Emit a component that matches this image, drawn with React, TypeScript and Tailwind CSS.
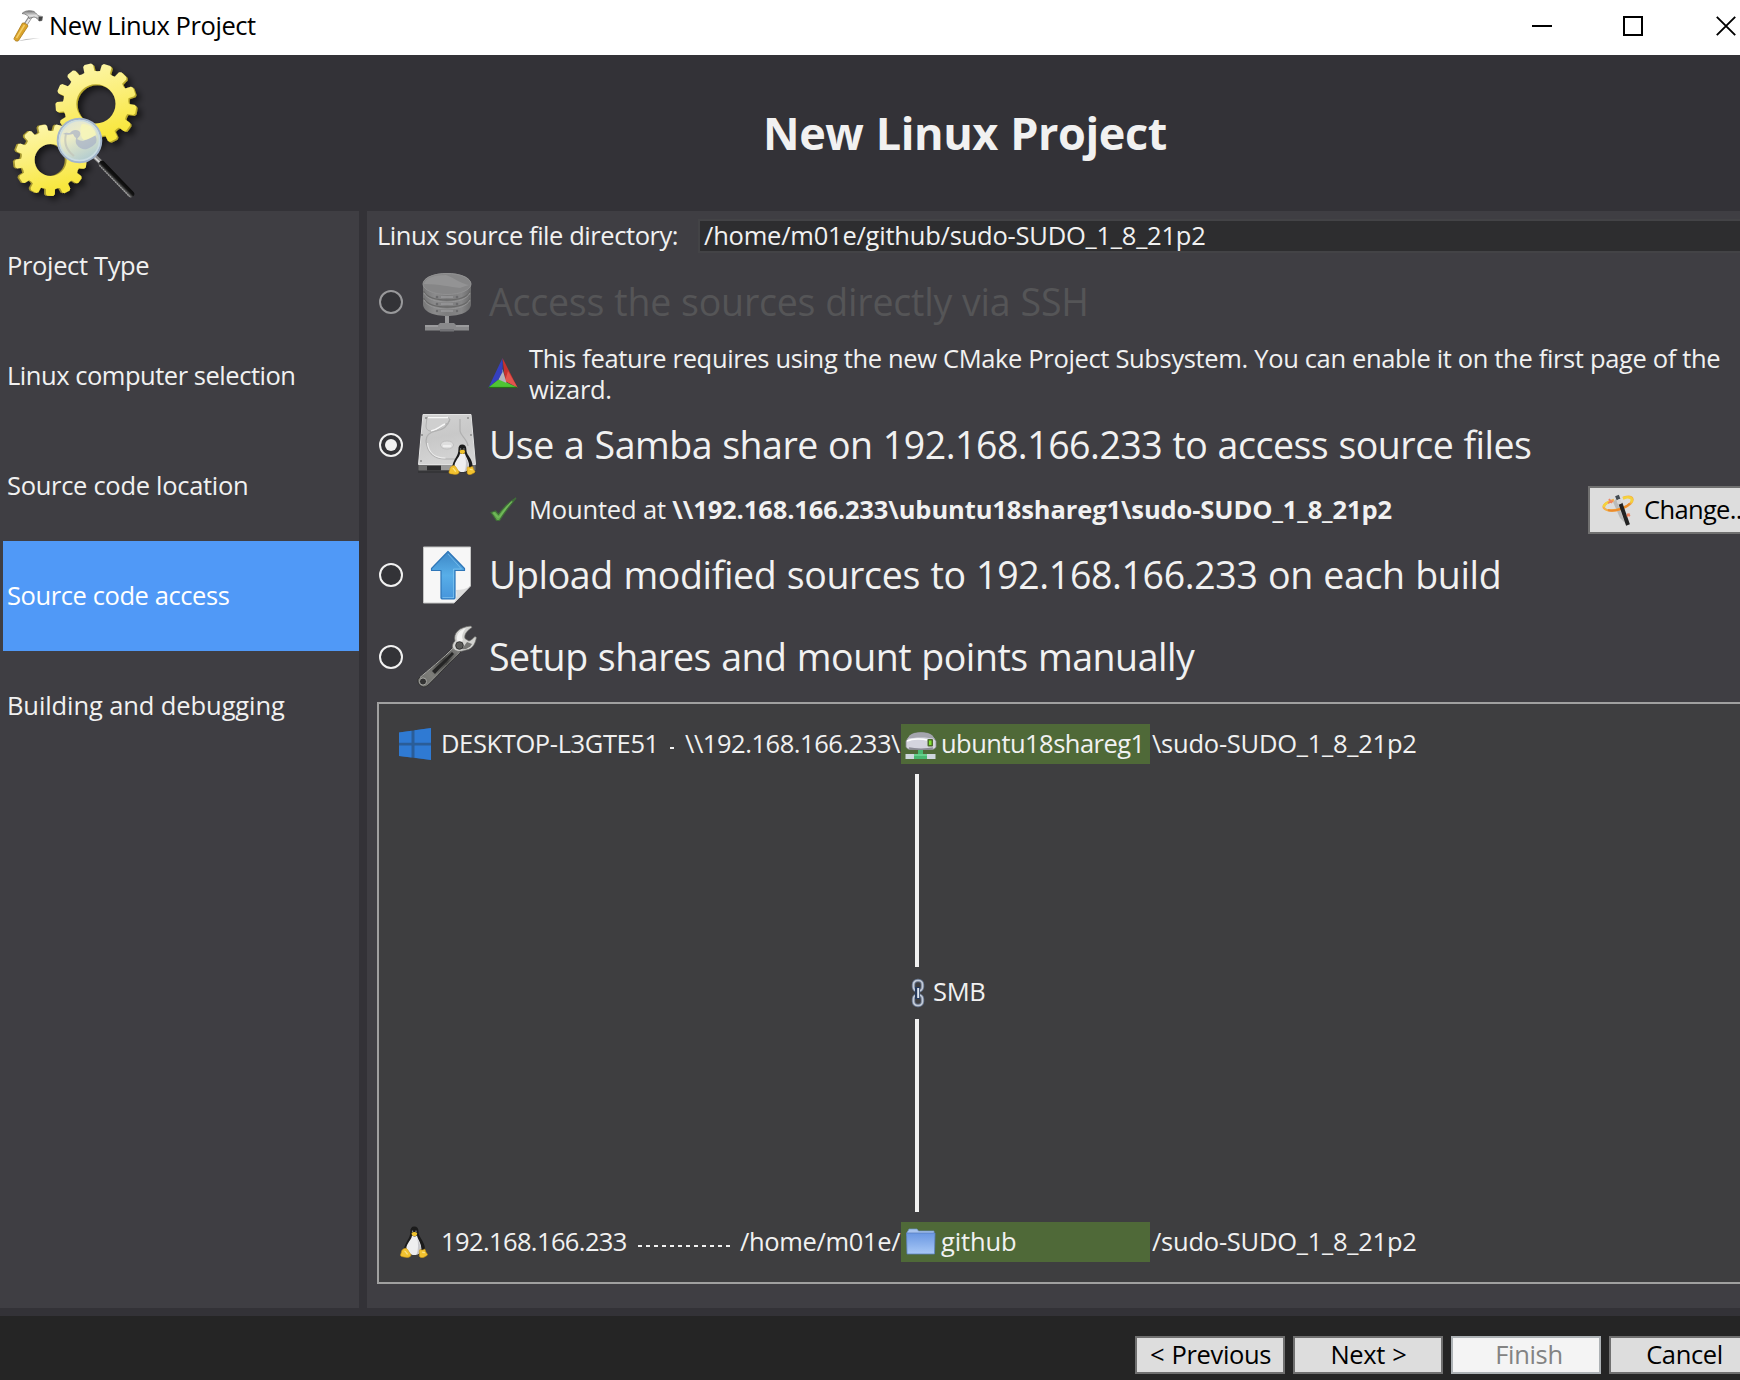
import React from 'react';

function gearPath(cx: number, cy: number, outer: number, root: number, hole: number, teeth: number, phase: number) {
  const step = (Math.PI * 2) / teeth;
  const start = (phase * Math.PI) / 180;
  const at = (r: number, a: number) => `${(cx + r * Math.cos(a)).toFixed(2)} ${(cy + r * Math.sin(a)).toFixed(2)}`;
  let d = '';
  for (let i = 0; i < teeth; i++) {
    const a = start + i * step;
    d += `${i ? 'L' : 'M'}${at(root, a - step * 0.32)}L${at(outer - 1.5, a - step * 0.27)}L${at(outer, a - step * 0.17)}L${at(outer, a + step * 0.17)}L${at(outer - 1.5, a + step * 0.27)}L${at(root, a + step * 0.32)}`;
    d += `L${at(root - 0.5, a + step * 0.5)}`;
  }
  d += `ZM${cx - hole} ${cy}a${hole} ${hole} 0 1 0 ${hole * 2} 0a${hole} ${hole} 0 1 0 ${-hole * 2} 0Z`;
  return d;
}

const upperGear = gearPath(96.5, 104, 40.5, 33, 19.6, 13, -101.6);
const lowerGear = gearPath(50, 160, 36, 29.5, 16, 13, -103.5);

function GearsLogo() {
  return (
    <svg className="h-[156px] w-[160px] shrink-0" viewBox="0 55 160 156">
      <defs>
        <linearGradient id="gearA" x1="0" y1="0" x2="0.3" y2="1">
          <stop offset="0" stopColor="#fdf8b4" />
          <stop offset="0.5" stopColor="#fbef7c" />
          <stop offset="1" stopColor="#f8e73c" />
        </linearGradient>
        <linearGradient id="lens" x1="0" y1="0" x2="0.5" y2="1">
          <stop offset="0" stopColor="#d9e0de" />
          <stop offset="0.45" stopColor="#eeedc6" />
          <stop offset="1" stopColor="#b4cdd0" />
        </linearGradient>
        <linearGradient id="grip" gradientUnits="userSpaceOnUse" x1="112" y1="181" x2="118" y2="175">
          <stop offset="0" stopColor="#c4c4c4" />
          <stop offset="0.3" stopColor="#555" />
          <stop offset="0.55" stopColor="#141414" />
          <stop offset="1" stopColor="#080808" />
        </linearGradient>
        <filter id="gearShadow" x="-20%" y="-20%" width="150%" height="150%">
          <feDropShadow dx="4" dy="3.5" stdDeviation="3" floodColor="#000" floodOpacity="0.6" />
        </filter>
      </defs>
      <g filter="url(#gearShadow)" fillRule="evenodd">
        <path d={upperGear} fill="#b9a92b" transform="translate(0.8 0.8)" />
        <path d={upperGear} fill="url(#gearA)" transform="translate(-0.6 -0.2)" />
      </g>
      <g filter="url(#gearShadow)" fillRule="evenodd">
        <path d={lowerGear} fill="#a89931" transform="translate(-1.2 0)" />
        <path d={lowerGear} fill="url(#gearA)" transform="translate(0.6 0)" />
      </g>
      <path d="M94.5 156.5l7 6.5" stroke="#8d8d8d" strokeWidth="4.5" />
      <path d="M94.5 157.5l7 6.5" stroke="#dcdcdc" strokeWidth="1.5" />
      <path d="M102 164l29 30" stroke="url(#grip)" strokeWidth="6.5" strokeLinecap="round" />
      <path d="M99.500 165.500l30 31" stroke="#9f9f9f" strokeWidth="1.2" strokeDasharray="1.5 1" />
      <circle cx="79.500" cy="140.500" r="21.800" fill="url(#lens)" stroke="#a3b5cc" strokeWidth="2" />
      <circle cx="79.500" cy="140.500" r="20" fill="none" stroke="#cadce2" strokeWidth="1.500" />
      <path d="M63 134c3-2 5-1 7-1 2-3 6-4 9-2 3 3 0 6-2 8 2 1 4 2 6 2 3-1 8-4 12-6 2 3 2 7 0 9-3 3-6 4-8 5-4 1-8-1-10-4-2-3-1-5-1-7-2-1-2-3-3-4-3 1-7 1-10 0z" fill="#a4aec6" opacity="0.650" />
      <path d="M66 134c-2 8 0 16 8 22" stroke="#c3c6ba" strokeWidth="2" fill="none" opacity="0.800" />
      <path d="M82 124c8 0 13 5 14 11-4 2-8 5-12 5-3-2-3-5-3-8-1-3-1-5 1-8z" fill="#f6f5b8" opacity="0.900" />
    </svg>
  );
}

function HammerIcon() {
  return (
    <svg className="h-[34px] w-[32px] shrink-0" viewBox="12 9 32 34">
      <defs>
        <linearGradient id="hSteel" x1="0" y1="0" x2="0" y2="1">
          <stop offset="0" stopColor="#777" />
          <stop offset="0.5" stopColor="#e4e4e4" />
          <stop offset="1" stopColor="#777" />
        </linearGradient>
      </defs>
      <path d="M16 41.500l24-3.500-14 1z" fill="#bbb" />
      <path d="M20 33l11-17" stroke="#8a8a8a" strokeWidth="4" />
      <path d="M20.500 32.500l10.500-16" stroke="#e8e8e8" strokeWidth="2.200" />
      <path d="M14 38.500l8.500-15.500c2-.5 4.500 1 5.500 3l-9.500 14.500c-1.500 1.500-4.500 0-4.500-2z" fill="#dba42a" stroke="#a87716" strokeWidth="0.800" />
      <path d="M16.500 38l8-13" stroke="#f4cd68" strokeWidth="1.500" />
      <path d="M22 13.500c3-3 8-3.500 12-2 2 1.500 3 3.500 5 4.500l3.500.5-.5 4-3 .5c-1-2-2.500-3.500-5-4l-5 1.500c-.5-3-3-4.500-7-5z" fill="url(#hSteel)" stroke="#666" strokeWidth="0.700" />
      <path d="M38.500 16.500l4 .5-1 3.500-2.500.5z" fill="#444" />
    </svg>
  );
}

function Tux({ className }: { className: string }) {
  return (
    <svg className={className} viewBox="0 0 28 32">
      <path d="M14.200 0.500c2.800 0 4.300 2 4.300 4.800 0 3 .8 4.500 2.500 7.200 2.500 4 4.500 7.500 3.800 12.500l-3.300 3.500H7.500L4 25c-.3-4.500 2-8 4-11.500 1.500-2.500 2.300-4.500 2.300-8 0-3 1.200-5 3.900-5z" fill="#1b1b1b" />
      <path d="M12 9.500c2 1.500 3.800 1 5 0 .5 3.500 4.300 7.500 4.300 13 0 4-3 6.500-7 6.500s-8-2.500-8-6.500c0-5 5.200-8.500 5.700-13z" fill="#eeeeef" />
      <path d="M17 11c.8 4 4 7.500 4.200 12 0 3-2 5-4.700 5.800 2-5 2-12 .5-17.800z" fill="#c8c8cc" />
      <path d="M11.500 7c1.500-1.300 4-1.300 5.700 0l-.5 2.200c-1.500 1.500-3 1.300-4.700 0z" fill="#f0c32e" />
      <circle cx="12.600" cy="5.200" r="0.700" fill="#999" />
      <circle cx="16" cy="5.200" r="0.700" fill="#999" />
      <path d="M4.500 22.500c1.500-.8 3 .5 4 2.500 1 2 3.500 3.500 2 5.200-1.500 1.600-4.500 1.300-6.500.8-1.500-.4-3.300-.3-3.500-1.700-.1-1.300.8-1.800.9-3.300.1-2 1.600-2.700 3.100-3.500zM20 23.500c1.500 1 3.500.5 4.500-.5 1.200 1 .8 2.700 2 4 1.300 1.300 1.500 2-.3 3-1.700 1-3.200 2-5.200 1.600-2-.5-1.800-2.600-1.700-4.200 0-1.500-.2-3 .7-3.900z" fill="#f2c230" stroke="#c99412" strokeWidth="0.600" />
      <path d="M4.500 25c1 .3 2 2 3 3.500M22 26c1 .4 2 .2 3 .8" stroke="#fbe58a" strokeWidth="1.200" fill="none" />
    </svg>
  );
}

function DatabaseIcon() {
  return (
    <svg className="h-[60px] w-[50px]" viewBox="0 0 50 60">
      <defs>
        <linearGradient id="dbG" x1="0" y1="0" x2="1" y2="0">
          <stop offset="0" stopColor="#777778" />
          <stop offset="0.250" stopColor="#8b8b8c" />
          <stop offset="0.500" stopColor="#7c7c7d" />
          <stop offset="0.800" stopColor="#868687" />
          <stop offset="1" stopColor="#6b6b6c" />
        </linearGradient>
      </defs>
      <path d="M23 42h4v9h-4z" fill="#98989a" />
      <path d="M3 53h13l2-2h14l2 2h13v5.500H3z" fill="#89898b" />
      <path d="M3 53h13v2H3zM34 53h13v2H34z" fill="#9b9b9d" />
      <path d="M18 57h14v2.500H18z" fill="#727276" />
      <path d="M1 12C1 5 12 1 25 1s24 4 24 11v20c0 8-11 12-24 12S1 40 1 32z" fill="url(#dbG)" />
      <path d="M1.500 19c3 6 12 9 23.500 9s20.500-3 23.500-9M1.500 26c3 6 12 9 23.500 9s20.500-3 23.500-9" stroke="#696969" strokeWidth="1.500" fill="none" />
      <path d="M2 21c3 6 12 9 23 9s20-3 23-9M2 28c3 6 12 9 23 9s20-3 23-9" stroke="#969697" strokeWidth="1" fill="none" />
      <ellipse cx="25" cy="12" rx="24" ry="10.500" fill="#868687" stroke="#919192" strokeWidth="1" />
      <path d="M2 12c1-6 10-9 22-9 10 4 16 9 23 10-3 1-7 2-9 3-10-1-20-4-36-4z" fill="#939394" />
      <g fill="#6a6a6c"><circle cx="15" cy="25" r="1.300" /><circle cx="35" cy="25" r="1.300" /><circle cx="15" cy="32" r="1.300" /><circle cx="35" cy="32" r="1.300" /><circle cx="15" cy="39" r="1.200" /><circle cx="35" cy="39" r="1.200" /></g>
      <path d="M19 25h12M19 32h12M19 39h12" stroke="#a4a4a6" strokeWidth="1.500" opacity="0.700" />
    </svg>
  );
}

function DiskIcon() {
  return (
    <div className="relative h-[64px] w-[60px]">
      <svg className="h-[64px] w-[60px]" viewBox="0 0 60 64">
        <defs>
          <linearGradient id="diskG" x1="0" y1="0" x2="0.200" y2="1">
            <stop offset="0" stopColor="#d2d2d2" />
            <stop offset="0.500" stopColor="#c8c8c8" />
            <stop offset="1" stopColor="#d4d4d4" />
          </linearGradient>
        </defs>
        <path d="M1 57h58v3H1z" fill="#2b2b2d" opacity="0.500" />
        <path d="M1.500 51h57v6.500h-57z" fill="#6c6c6c" />
        <path d="M10 53h14v4.500H10z" fill="#2c2c2e" />
        <path d="M24 52h20v5H24z" fill="#9a9a9a" />
        <path d="M6 1.500h48L58.500 51.500H1.500z" fill="url(#diskG)" stroke="#e2e2e2" strokeWidth="1" />
        <path d="M10 4h18c6 0 6 5 1 7-6 3-7 6-12 7-6 1-8-2-8-5z" fill="#cfcfcf" stroke="#b2b2b2" strokeWidth="1" />
        <path d="M11 4.500h20M14 18c6-1 8-4 14-7" stroke="#f7f7f7" strokeWidth="1.500" fill="none" />
        <path d="M9 28c1 12 9 18 19 18h10M9 28c0-6 4-9 10-10s12-5 14-12M43 6v11c0 6 7 8 8 16" stroke="#b0b0b0" strokeWidth="1.200" fill="none" />
        <path d="M10.500 30c1 10 8 15 18 15" stroke="#ececec" strokeWidth="1.200" fill="none" />
        <ellipse cx="30" cy="32" rx="6.500" ry="4" fill="#dedede" stroke="#b8b8b8" strokeWidth="0.800" />
        <path d="M26 33h8" stroke="#f5f5f5" strokeWidth="1.500" />
        <g fill="#8a8a8a"><circle cx="9" cy="5" r="1" /><circle cx="51" cy="5" r="1" /><circle cx="5" cy="22" r="1" /><circle cx="54" cy="22" r="1" /><circle cx="4" cy="48" r="1" /></g>
      </svg>
      <Tux className="absolute top-[31px] left-[31px] h-[31px] w-[28px]" />
    </div>
  );
}

function UploadIcon() {
  return (
    <svg className="h-[58px] w-[50px]" viewBox="0 0 50 58">
      <defs>
        <linearGradient id="upG" x1="0" y1="0" x2="0" y2="1">
          <stop offset="0" stopColor="#3d87c6" />
          <stop offset="0.500" stopColor="#58aee8" />
          <stop offset="1" stopColor="#4795db" />
        </linearGradient>
      </defs>
      <path d="M1.500 1h47v39L32 57H1.500z" fill="#f7f7f7" stroke="#c4c4c4" strokeWidth="1" />
      <path d="M48.500 40L32 57c3-6 3-9 2-13 5 0 10-1 14.500-4z" fill="#dcdcdc" />
      <path d="M26 5.500L42.500 22.500v2H33v27.500l-1 1H20l-1-1V24.500H9.500v-2z" fill="url(#upG)" stroke="#2e76b8" strokeWidth="1.200" strokeLinejoin="round" />
      <path d="M31.500 52V23h8L26 8M20.500 51.500h11" fill="none" stroke="#8acbf2" strokeWidth="1" opacity="0.600" />
    </svg>
  );
}

function WrenchIcon() {
  return (
    <svg className="mb-[2px] h-[64px] w-[60px]" viewBox="1 -1 60 64">
      <defs>
        <linearGradient id="wrG" gradientUnits="userSpaceOnUse" x1="5" y1="58" x2="50" y2="10">
          <stop offset="0" stopColor="#73736f" />
          <stop offset="0.200" stopColor="#7d7d79" />
          <stop offset="0.500" stopColor="#3f3f3d" />
          <stop offset="0.750" stopColor="#858583" />
          <stop offset="1" stopColor="#f0f0ee" />
        </linearGradient>
      </defs>
      <path d="M2 54c5-5 26-21 36-33l7 6C35 36 17 56 11 61c-5 3-10-2-9-7z" fill="url(#wrG)" stroke="#2c2c2c" strokeWidth="0.800" />
      <path d="M4 52.500C10 47 28 33 38 22" fill="none" stroke="#a8a8a5" strokeWidth="1" />
      <path d="M11 59.500C18 53 34 36 43 28" fill="none" stroke="#8a8a87" strokeWidth="0.900" />
      <path d="M16 46c6-6 14-12 20-19l2 2c-6 6-13 13-19 20z" fill="#252525" />
      <circle cx="7" cy="56.500" r="3.600" fill="#333" stroke="#a9a9a5" strokeWidth="1" />
      <path d="M39 16c-2-8 4-14 16-15l1 1.500c-5 3-8 7-7 11l4 2.500c3-1 4-3 6-4.500l1.500 1c-1 5-3 10-8 12-5 1-9 3-13 1-4-2-4-6-.5-9.500z" fill="#d2d2d0" stroke="#686866" strokeWidth="0.700" />
      <path d="M41 15c-1-6 3-10 9-12-3 4-5 8-3 12l-4 4z" fill="#fff" opacity="0.700" />
      <path d="M51 17l-5 7c3 1 8-1 10-5z" fill="#767674" />
      <circle cx="43.500" cy="20.500" r="3.800" fill="#5a5a58" stroke="#333" strokeWidth="1" />
    </svg>
  );
}

function CMakeIcon() {
  return (
    <svg className="mb-[2px] h-[32px] w-[30px]" viewBox="0 0 30 32">
      <path d="M14.500 1L.5 30.500 14 19z" fill="#3540c0" />
      <path d="M14.500 1l15 29.500L17 24z" fill="#c8312f" />
      <path d="M20 14l9.500 16.500L17 24z" fill="#e2554e" />
      <path d="M.5 30.500L11 22l18.500 8.500z" fill="#4fc534" />
      <path d="M14.500 12L18.500 26 10.500 22.500z" fill="#b4b4bc" />
      <path d="M14.500 4v11l-4 7.500L5 26z" fill="#3540c0" />
      <path d="M1 30.500h28" stroke="#266d18" strokeWidth="1.200" />
    </svg>
  );
}

function CheckIcon() {
  return (
    <svg className="h-[28px] w-[30px]" viewBox="0 0 30 28">
      <path d="M3 16.500l4.500-1.500 3 3.500C15 12 21 6 28 2 21.500 10 16 17 11.500 24.500H8.500C7 22 5 19 3 16.500z" fill="#62ab4c" stroke="#3f6c38" strokeWidth="1.200" />
      <path d="M5.500 16.500l4.500 5 2-1c4-6 7-10 12-15" stroke="#7abf62" strokeWidth="1.300" fill="none" opacity="0.700" />
    </svg>
  );
}

function WandIcon() {
  return (
    <svg className="h-[32px] w-[32px] shrink-0" viewBox="0 0 32 32">
      <path d="M14 5l9 24-5-5-7-16z" fill="#888" opacity="0.400" />
      <path d="M12 6C5 8 .5 11 2 14c2 3.500 11 3 18 .5S32 7.500 30 4c-1.300-2-5-1.500-9 0" fill="none" stroke="#f2b04a" strokeWidth="2.500" />
      <path d="M6 16c4 1.500 10 0 14-1.500s6-3 8-5" fill="none" stroke="#ec8b2c" strokeWidth="2.200" />
      <path d="M29 8.500c3-5-2.500-6.500-8-4M2 13c0-2 2-4 5-5" fill="none" stroke="#f5d23c" strokeWidth="2.600" />
      <path d="M18.500 9.500L26 31" stroke="#222" strokeWidth="4" />
      <path d="M15 1.500l1.500 4" stroke="#444c52" strokeWidth="4" />
      <path d="M16.500 5.500l1.800 4.500" stroke="#d4d4d4" strokeWidth="3.500" />
      <path d="M7 5l3 4M6 9l5-2M25 20l3 2M25 22.500l2.500-3" stroke="#ee8560" strokeWidth="1.800" />
    </svg>
  );
}

function WindowsIcon() {
  return (
    <svg className="h-[32px] w-[32px] shrink-0" viewBox="0 0 32 32">
      <path d="M0 4.500L32 0v32L0 28z" fill="#2a5d98" />
      <path d="M0 4.500l12.500-1.800v12H0zM15.500 2.300L32 0v14.700H15.500zM0 17.500h12.500V29.500L0 28zM15.500 17.500H32V32l-16.500-2.200z" fill="#2f7ad3" />
    </svg>
  );
}

function ShareIcon() {
  return (
    <svg className="mt-[4px] h-[30px] w-[32px] shrink-0" viewBox="0 0 32 30">
      <path d="M5 4.500C9 .5 23 .5 27 4.500l4 5.500v6c-1 2-3 2.500-5 2.500H6c-2 0-4-.5-5-2.500v-6z" fill="#d4d4de" stroke="#88888f" strokeWidth="0.800" />
      <path d="M5 4.500C9 .5 23 .5 27 4.500l3 3.500c-6-2-22-2-28 0z" fill="#a5a5ae" />
      <path d="M2 10c6-2.500 15-2.500 20-1" stroke="#fff" strokeWidth="1.500" fill="none" />
      <path d="M4 17c6 1.500 18 1.500 24 0" stroke="#8b8b95" strokeWidth="1.500" fill="none" />
      <rect x="22.500" y="8" width="5.500" height="7.500" rx="1" fill="#4b6a2a" />
      <rect x="24" y="9.500" width="2.500" height="4.500" fill="#7ee02f" />
      <path d="M13 19h5v4h4v5H9v-5h4z" fill="#48b970" />
      <path d="M.5 23H9v5H.5zM22 23h8.500v5H22z" fill="#cfd7de" />
      <path d="M9 23h13v2H9z" fill="#67d18c" />
    </svg>
  );
}

function FolderIcon() {
  return (
    <svg className="h-[28px] w-[32px] shrink-0" viewBox="0 0 32 28">
      <defs>
        <linearGradient id="foG" x1="0" y1="0" x2="0" y2="1">
          <stop offset="0" stopColor="#6a97e2" />
          <stop offset="1" stopColor="#a8c8f6" />
        </linearGradient>
      </defs>
      <path d="M3 3l1-2h8l1.500 2H29v5H2V4z" fill="#a7c3ee" stroke="#6e8fc4" strokeWidth="0.700" />
      <path d="M1.500 5h28.500L29.500 26H2z" fill="url(#foG)" stroke="#5a80c0" strokeWidth="0.800" />
    </svg>
  );
}

function ChainIcon() {
  return (
    <svg className="h-[30px] w-[14px] shrink-0" viewBox="0 0 14 30">
      <rect x="2.500" y="2.500" width="9" height="10.500" rx="4" fill="none" stroke="#66758e" strokeWidth="3.400" />
      <rect x="2.500" y="17" width="9" height="10.500" rx="4" fill="none" stroke="#66758e" strokeWidth="3.400" />
      <rect x="2.500" y="2.500" width="9" height="10.500" rx="4" fill="none" stroke="#c3cad6" strokeWidth="1.700" />
      <rect x="2.500" y="17" width="9" height="10.500" rx="4" fill="none" stroke="#c3cad6" strokeWidth="1.700" />
      <path d="M6.500 9v12" stroke="#263a5c" strokeWidth="5" />
      <path d="M7.200 10v10" stroke="#dfe8f2" strokeWidth="2" />
    </svg>
  );
}

function Radio({ checked, disabled }: { checked?: boolean; disabled?: boolean }) {
  return (
    <span
      className={`ml-[12px] flex size-6 shrink-0 items-center justify-center rounded-full border-2 bg-[#333337] ${disabled ? 'border-[#99999b]' : 'border-[#f1f1f1]'}`}
    >
      {checked && <span className="size-3 rounded-full bg-[#f1f1f1]" />}
    </span>
  );
}

function OptionRow(props: { icon: React.ReactNode; height: string; children: React.ReactNode; tracking: string; checked?: boolean; disabled?: boolean }) {
  return (
    <div className={`flex shrink-0 items-center ${props.height}`}>
      <Radio checked={props.checked} disabled={props.disabled} />
      <span className="ml-[10px] flex w-[68px] items-center justify-center">{props.icon}</span>
      <span className={`ml-[8px] pb-px text-[37.5px] leading-none ${props.tracking} ${props.disabled ? 'text-[#555557]' : ''}`}>{props.children}</span>
    </div>
  );
}

const steps = [
  { label: 'Project Type', tracking: 'tracking-[-0.35px]' },
  { label: 'Linux computer selection', tracking: 'tracking-[-0.47px]' },
  { label: 'Source code location', tracking: 'tracking-[-0.3px]' },
  { label: 'Source code access', tracking: 'tracking-[-0.41px]', active: true },
  { label: 'Building and debugging', tracking: 'tracking-[-0.1px]' },
];

function FooterButton({ children, disabled }: { children: React.ReactNode; disabled?: boolean }) {
  return (
    <button
      className={`flex h-[38px] w-[150px] shrink-0 items-center justify-center border-2 leading-none tracking-[-0.35px] [word-spacing:1px] ${disabled ? 'border-[#adb2b5] bg-[#f4f4f4] pl-[6px] text-[#838383]' : 'border-[#707070] bg-[#dddddd] pl-px text-black'}`}
    >
      {children}
    </button>
  );
}

export default function App() {
  return (
    <div className="flex h-[1380px] w-[1740px] flex-col overflow-hidden bg-[#3f3e43] font-['Open_Sans','Noto_Sans',sans-serif] text-[25.5px] whitespace-nowrap text-[#f1f1f1]">
      <div className="flex h-[55px] shrink-0 items-start bg-white text-black">
        <div className="mt-[9px] ml-[12px]"><HammerIcon /></div>
        <span className="mt-[7px] ml-[5px] leading-[36px] tracking-[-0.43px]">New Linux Project</span>
        <div className="mt-[15px] ml-auto flex items-center">
          <svg className="h-[22px] w-[20px]" viewBox="0 0 20 22"><path d="M0 11h20" stroke="#000" strokeWidth="2" /></svg>
          <svg className="ml-[71px] h-[22px] w-[20px]" viewBox="0 0 20 22"><path d="M1 2h18v18H1z" fill="none" stroke="#000" strokeWidth="2" /></svg>
          <svg className="mr-[4px] ml-[73px] h-[22px] w-[20px]" viewBox="0 0 20 22"><path d="M.8 1.800l18.400 18.400M19.200 1.800L.8 20.200" stroke="#000" strokeWidth="1.900" /></svg>
        </div>
      </div>

      <div className="flex h-[156px] shrink-0 items-center bg-[#333237]">
        <GearsLogo />
        <h1 className="ml-[603px] pb-[2px] text-[45px] leading-none font-bold tracking-[-0.42px] [word-spacing:1px]">New Linux Project</h1>
      </div>

      <div className="flex h-[1097px] shrink-0">
        <nav className="flex w-[359px] shrink-0 flex-col pl-[3px]">
          {steps.map((s) => (
            <div key={s.label} className={`flex h-[110px] items-center pl-[4px] leading-none ${s.tracking} ${s.active ? 'bg-[#5099f7] text-white' : ''}`}>
              {s.label}
            </div>
          ))}
        </nav>
        <div className="w-[8px] shrink-0 bg-[#333237]" />

        <main className="flex w-[1373px] shrink-0 flex-col overflow-hidden">
          <div className="flex h-[50px] shrink-0 items-center pl-[10px]">
            <span className="w-[321px] leading-none tracking-[-0.44px]">Linux source file directory:</span>
            <div className="flex h-[34px] flex-1 items-center overflow-hidden border-2 border-r-0 border-[#434346] bg-[#2d2d2f] pl-[4px] leading-none tracking-[-0.22px]">
              /home/m01e/github/sudo-SUDO_1_8_21p2
            </div>
          </div>

          <OptionRow icon={<DatabaseIcon />} height="h-[82px]" tracking="tracking-[-0.22px] [word-spacing:0.6px]" disabled>
            Access the sources directly via SSH
          </OptionRow>
          <div className="flex h-[62px] shrink-0 items-center pl-[121px]">
            <CMakeIcon />
            <p className="ml-[11px] pb-px leading-[31px] tracking-[-0.345px]">
              This feature requires using the new CMake Project Subsystem. You can enable it on the first page of the
              <br />
              wizard.
            </p>
          </div>

          <OptionRow icon={<DiskIcon />} height="h-[80px]" tracking="tracking-[-0.5px] [word-spacing:1px]" checked>
            Use a Samba share on 192.168.166.233 to access source files
          </OptionRow>
          <div className="flex h-[50px] shrink-0 items-center pl-[121px]">
            <CheckIcon />
            <span className="ml-[11px] leading-none tracking-[-0.16px]">
              Mounted at <b className="tracking-[-0.11px]">{'\\\\192.168.166.233\\ubuntu18shareg1\\sudo-SUDO_1_8_21p2'}</b>
            </span>
            <button className="mr-[-40px] ml-auto flex h-[48px] w-[192px] shrink-0 items-center border-2 border-[#707070] bg-[#dddddd] pl-[12px] leading-none tracking-[-0.65px] text-black">
              <WandIcon />
              <span className="ml-[10px]">Change...</span>
            </button>
          </div>

          <OptionRow icon={<UploadIcon />} height="h-[80px]" tracking="tracking-[-0.36px] [word-spacing:1.1px]">
            Upload modified sources to 192.168.166.233 on each build
          </OptionRow>
          <OptionRow icon={<WrenchIcon />} height="h-[84px]" tracking="tracking-[-0.46px] [word-spacing:0.9px]">
            Setup shares and mount points manually
          </OptionRow>

          <section className="mt-[3px] ml-[10px] flex h-[582px] shrink-0 flex-col border-2 border-r-0 border-[#a0a0a0] bg-[#3e3e40] pt-[20px] pl-[20px]">
            <div className="flex h-[40px] items-center leading-none">
              <WindowsIcon />
              <span className="ml-[10px] w-[229px] tracking-[-0.38px]">DESKTOP-L3GTE51</span>
              <span className="mt-[8px] h-[2px] w-[4px] bg-[#f1f1f1]" />
              <span className="ml-[11px] w-[217px] tracking-[-0.45px]">{'\\\\192.168.166.233\\'}</span>
              <div className="ml-[-1px] flex h-[40px] w-[249px] items-center bg-[#4f6938] pl-[4px]">
                <ShareIcon />
                <span className="ml-[4px] tracking-[-0.53px]">ubuntu18shareg1</span>
              </div>
              <span className="ml-[2px] tracking-[-0.24px]">{'\\sudo-SUDO_1_8_21p2'}</span>
            </div>
            <div className="mt-[10px] ml-[516px] h-[193px] w-[4px] bg-[#f1f1f1]" />
            <div className="ml-[512px] flex h-[52px] items-center leading-none">
              <ChainIcon />
              <span className="ml-[8px] pb-[2px] tracking-[-0.3px]">SMB</span>
            </div>
            <div className="ml-[516px] h-[193px] w-[4px] bg-[#f1f1f1]" />
            <div className="mt-[10px] flex h-[40px] items-center leading-none">
              <Tux className="mr-px ml-[-1px] h-[32px] w-[32px] shrink-0" />
              <span className="ml-[10px] w-[197px] tracking-[-0.62px]">192.168.166.233</span>
              <span className="mt-[8px] flex w-[92px] justify-between">
                {Array.from({ length: 12 }, (_, i) => (
                  <span key={i} className="h-[2px] w-[4px] bg-[#f1f1f1]" />
                ))}
              </span>
              <span className="ml-[10px] w-[161px] tracking-[-0.35px]">/home/m01e/</span>
              <div className="flex h-[40px] w-[249px] items-center bg-[#4f6938] pl-[4px]">
                <FolderIcon />
                <span className="ml-[4px] tracking-[-0.15px]">github</span>
              </div>
              <span className="ml-[2px] tracking-[-0.24px]">/sudo-SUDO_1_8_21p2</span>
            </div>
          </section>
        </main>
      </div>

      <div className="h-[8px] shrink-0 bg-[#333237]" />
      <footer className="flex h-[64px] shrink-0 gap-[8px] bg-[#252525] pt-[20px] pl-[1135px]">
        <FooterButton>&lt; Previous</FooterButton>
        <FooterButton>Next &gt;</FooterButton>
        <FooterButton disabled>Finish</FooterButton>
        <FooterButton>Cancel</FooterButton>
      </footer>
    </div>
  );
}
